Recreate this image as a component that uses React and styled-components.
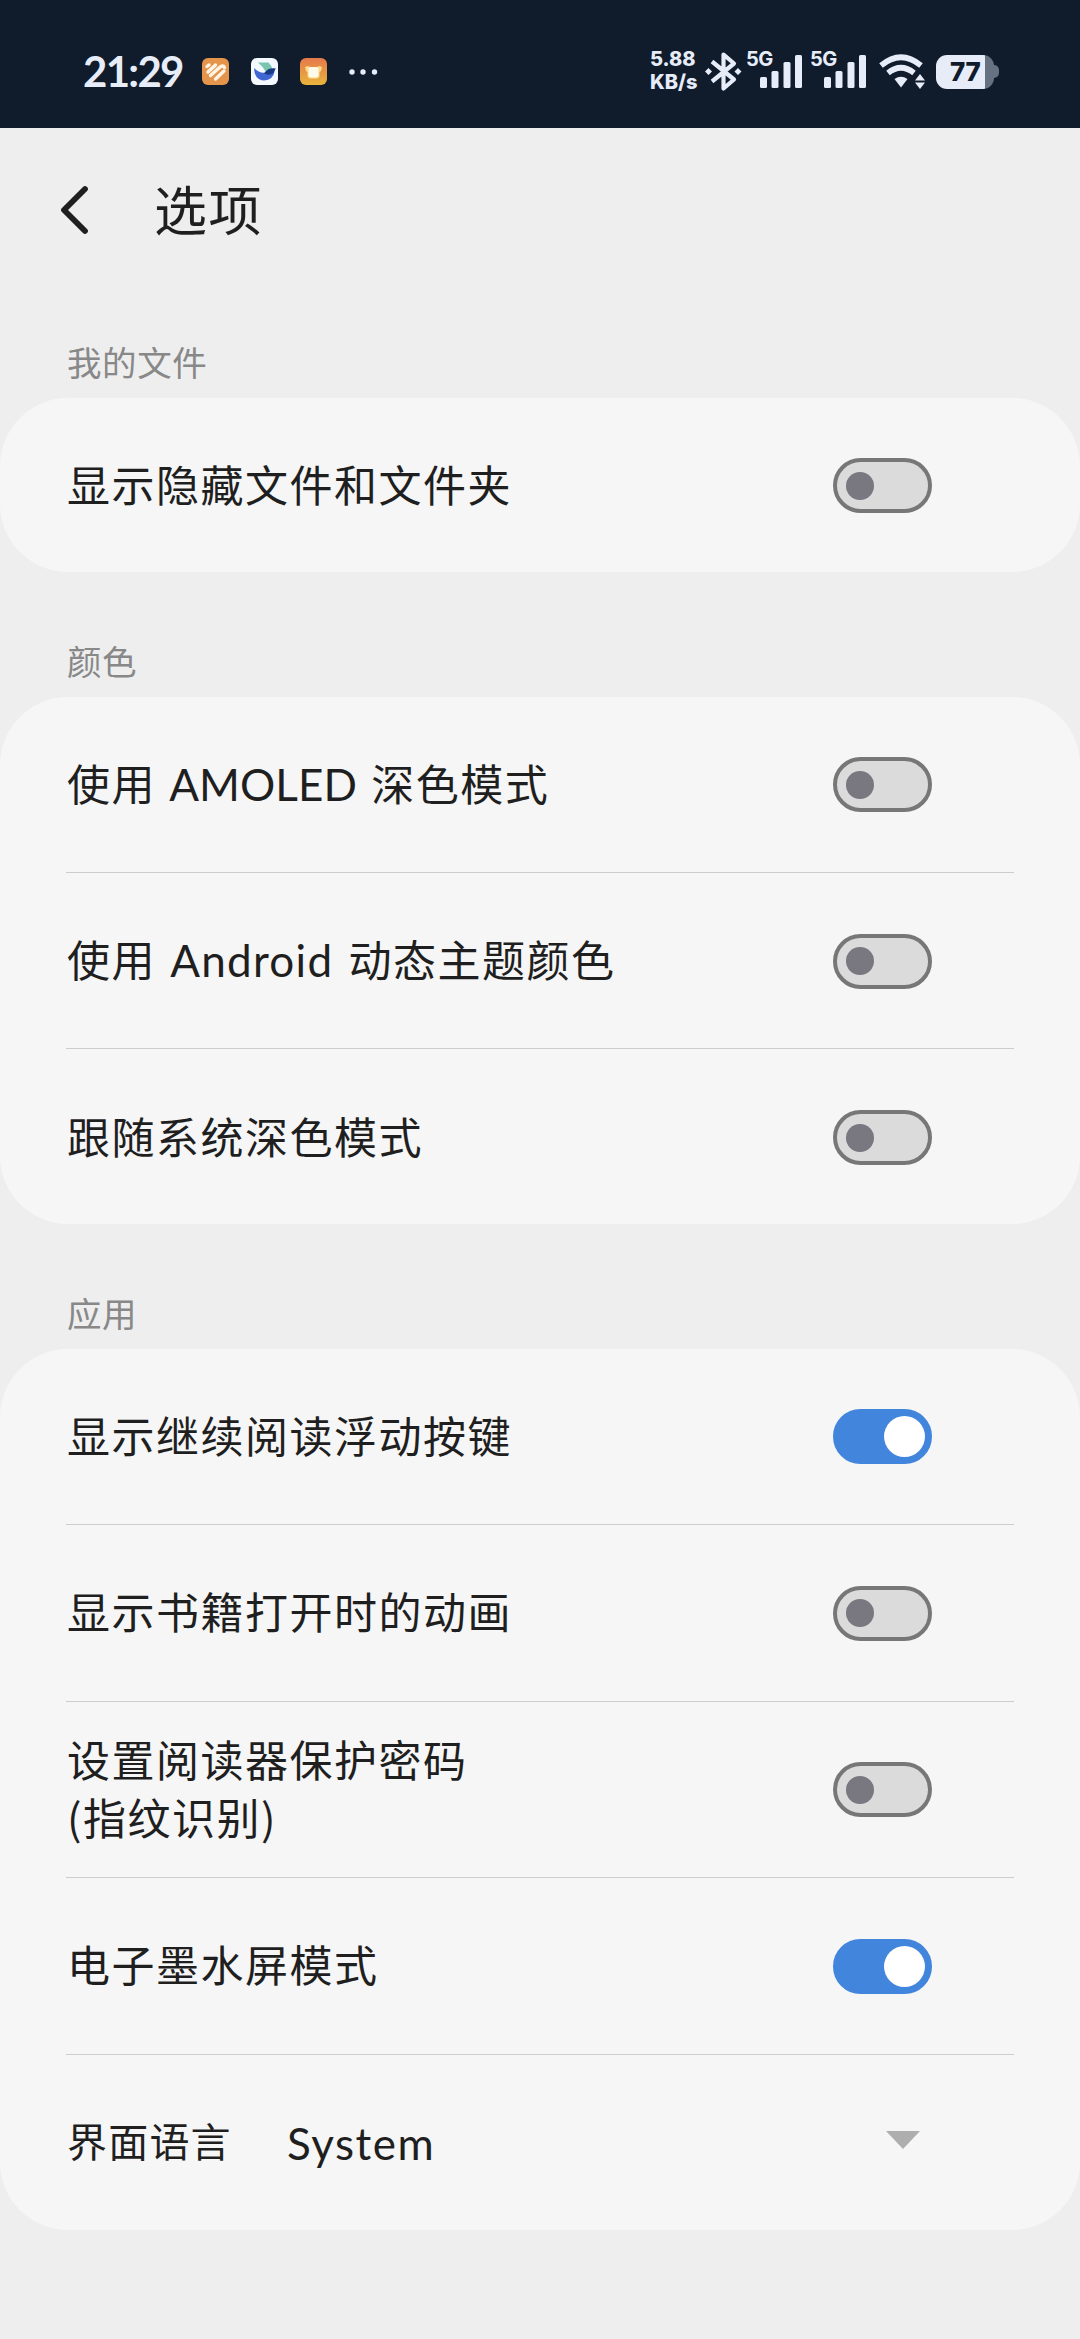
import { useState } from "react";
import styled, { createGlobalStyle, css } from "styled-components";

const sections = [
  {
    title: "我的文件",
    rows: [{ id: "hidden", label: "显示隐藏文件和文件夹", on: false }],
  },
  {
    title: "颜色",
    rows: [
      { id: "amoled", label: ["使用 ", "AMOLED", " 深色模式"], tight: true, on: false },
      { id: "dynamic", label: ["使用 ", "Android", " 动态主题颜色"], on: false },
      { id: "follow", label: "跟随系统深色模式", on: false },
    ],
  },
  {
    title: "应用",
    rows: [
      { id: "continue", label: "显示继续阅读浮动按键", on: true },
      { id: "animation", label: "显示书籍打开时的动画", on: false },
      { id: "password", label: "设置阅读器保护密码\n(指纹识别)", on: false },
      { id: "eink", label: "电子墨水屏模式", on: true },
      { id: "language", label: "界面语言", value: "System" },
    ],
  },
];

const GlobalStyle = createGlobalStyle`
  * {
    box-sizing: border-box;
  }
  body {
    margin: 0;
    background-color: #eeeeee;
    color: #1f1f1f;
    font-family: "Noto Sans CJK SC", sans-serif;
  }
`;

const Page = styled.div`
  width: 1080px;
  min-height: 2339px;
  background-color: #eeeeee;
`;

const StatusBar = styled.header`
  display: flex;
  justify-content: space-between;
  height: 128px;
  padding: 50px 81px 0 83px;
  background-color: #101b2c;
  color: #e6edf8;
  font-family: Inter, sans-serif;
`;
const StatusGroup = styled.div`
  display: flex;
  align-items: center;
  height: 43px;
`;
const Clock = styled.span`
  width: 119px;
  font-family: Lato, sans-serif;
  font-size: 42px;
  font-weight: 700;
  line-height: 43px;
  letter-spacing: -1.7px;
`;
const AppIcons = styled.div`
  display: flex;
  gap: 22px;
`;
const MoreDots = styled.svg`
  margin-left: 21px;
`;
const Speed = styled.div`
  width: 55px;
  font-size: 20px;
  font-weight: 800;
  line-height: 22.5px;
  padding-bottom: 2px;
`;
const Signal = styled.div`
  display: flex;
  align-items: flex-start;
  width: 64px;
  height: 43px;
`;
const SignalLabel = styled.span`
  width: 14px;
  font-size: 20px;
  font-weight: 700;
  line-height: 18px;
  letter-spacing: -0.5px;
  white-space: nowrap;
`;
const Battery = styled.div`
  display: flex;
  align-items: center;
  margin-left: 11px;
`;
const BatteryBody = styled.div`
  width: 58px;
  height: 34px;
  border-radius: 11px;
  background: linear-gradient(90deg, #e6edf8 0 49px, #667182 49px);
  color: #101b2c;
  font-size: 26px;
  font-weight: 800;
  line-height: 34px;
  letter-spacing: -0.4px;
  padding-left: 14px;
`;
const BatteryCap = styled.div`
  width: 5px;
  height: 13px;
  border-radius: 0 5px 5px 0;
  background-color: #667182;
`;

const TopBar = styled.div`
  display: flex;
  align-items: center;
  height: 164px;
  padding-left: 59px;
`;
const BackButton = styled.button`
  display: flex;
  padding: 0;
  border: none;
  background: none;
  color: inherit;
  cursor: pointer;
`;
const Title = styled.h1`
  margin: 0 0 5px 65px;
  font-size: 53px;
  font-weight: 400;
  line-height: 60px;
  letter-spacing: 1.5px;
`;

const Section = styled.section`
  display: flex;
  flex-direction: column;
`;
const SectionTitle = styled.h2`
  display: flex;
  align-items: flex-end;
  height: ${({ $first }) => ($first ? "106px" : "125px")};
  margin: 0;
  padding: 0 0 12px 67px;
  color: #888888;
  font-size: 34.5px;
  font-weight: 400;
  line-height: 50px;
  letter-spacing: 0.6px;
`;
const Card = styled.div`
  border-radius: 68px;
  padding: 0 66px;
  background-color: #f6f6f6;
`;
const Row = styled.div`
  display: flex;
  align-items: center;
  height: 174px;
  padding-right: 82px;
`;
const Divider = styled.hr`
  height: 1px;
  margin: 0.8px 0;
  border: none;
  background-color: #cdcdcd;
`;
const Label = styled.span`
  flex: 1;
  padding: 0 0 ${({ $mixed }) => ($mixed ? "3px" : "5px")} 1px;
  white-space: pre-line;
  font-size: 43px;
  line-height: 58px;
  letter-spacing: 1.5px;
  ${({ $compact }) =>
    $compact &&
    css`
      flex: none;
      width: 221px;
      font-size: 40px;
      letter-spacing: 1.2px;
    `}
`;
const Latin = styled.span`
  margin: 0 ${({ $tight }) => ($tight ? "3px 0 2px" : "4px 0 3px")};
  font-family: Lato, sans-serif;
  font-size: 44px;
  font-weight: 400;
  letter-spacing: ${({ $tight }) => ($tight ? "0.1px" : "1.3px")};
`;
const Value = styled(Latin)`
  flex: 1;
  margin: 0;
  letter-spacing: 1.5px;
`;
const Arrow = styled.svg`
  margin: 0 12px 5px 0;
`;

const Toggle = styled.button`
  display: flex;
  align-items: center;
  flex: none;
  width: 99px;
  height: 55px;
  margin-top: 1px;
  padding: 0 9px;
  border: 4px solid #777777;
  border-radius: 28px;
  background-color: #dbdbdb;
  cursor: pointer;
  ${({ $on }) =>
    $on &&
    css`
      justify-content: flex-end;
      padding: 0 3px;
      border-color: #4285dc;
      background-color: #4285dc;
    `}
`;
const Knob = styled.span`
  width: ${({ $on }) => ($on ? "41px" : "28px")};
  height: ${({ $on }) => ($on ? "41px" : "28px")};
  border-radius: 50%;
  background-color: ${({ $on }) => ($on ? "#ffffff" : "#79777f")};
`;

function NoteIcon() {
  return (
    <svg width="27" height="27" viewBox="0 0 27 27">
      <rect width="27" height="27" rx="6" fill="#e5954b" />
      <g fill="none" stroke="#fff4e6" strokeWidth="3.4" strokeLinecap="round">
        <path d="M5 8.5L7 7" />
        <path d="M6 14L13.5 7" />
        <path d="M8.5 17.5L17.5 9.5Q21 6.5 22.5 9.5" />
        <path d="M13.5 21L22 13" />
      </g>
    </svg>
  );
}

function BirdIcon() {
  return (
    <svg width="27" height="27" viewBox="0 0 27 27">
      <rect width="27" height="27" rx="6" fill="#f4f8ff" />
      <path d="M7 4.5H17.5Q20.5 7.5 21 10.5L14.5 13.5Q12 8.5 7 4.5Z" fill="#79c5b0" />
      <path d="M3 10Q9 16 14.5 14.5L24 12Q22 22.5 13 22.5Q3.5 22 3 10Z" fill="#3f66d3" />
      <path d="M13 15.5Q17 9 25 10.5Q23 12.5 22.5 15Q18 18 13 15.5Z" fill="#183b82" />
    </svg>
  );
}

function CrabIcon() {
  return (
    <svg width="27" height="27" viewBox="0 0 27 27">
      <defs>
        <linearGradient id="crab" x1="0" y1="0" x2="0" y2="1">
          <stop offset="0" stopColor="#e5794a" />
          <stop offset="1" stopColor="#e8b53c" />
        </linearGradient>
      </defs>
      <rect width="27" height="27" rx="6" fill="url(#crab)" />
      <path
        d="M5 9L8 8L10 9H17L19 8L22 9L21 13L19.5 14V18Q19 20.5 16 20.5H11Q8 20.5 7.5 18V14L6 13Z"
        fill="#ffd98c"
      />
      <rect x="8.5" y="9" width="10" height="10.5" rx="3" fill="#fffbea" />
    </svg>
  );
}

function SignalBars() {
  return (
    <svg width="43" height="43" viewBox="0 0 43 43" fill="#e6edf8">
      <rect x="0" y="27" width="7" height="11" rx="1.5" />
      <rect x="11.5" y="21" width="7" height="17" rx="1.5" />
      <rect x="23.5" y="12" width="7" height="26" rx="1.5" />
      <rect x="35" y="5" width="7" height="33" rx="1.5" />
    </svg>
  );
}

function Bluetooth() {
  return (
    <svg width="41" height="43" viewBox="0 0 41 43">
      <path
        d="M7 11.5L29 29.5L18.5 38.5V4.5L29 13.5L7 31.5"
        fill="none"
        stroke="#e6edf8"
        strokeWidth="4.2"
        strokeLinejoin="round"
      />
      <path d="M3.5 18L7 21.5L3.5 25L0 21.5ZM33 18L36.5 21.5L33 25L29.5 21.5Z" fill="#e6edf8" />
    </svg>
  );
}

const WifiIcon = styled.svg`
  margin-left: 5px;
`;

function Wifi() {
  return (
    <WifiIcon width="46" height="43" viewBox="0 0 46 43">
      <g fill="none" stroke="#e6edf8" strokeWidth="5.6">
        <path d="M2 15.5Q22 -1 42 15.5" />
        <path d="M9 23Q22 12.5 35 23" />
      </g>
      <path d="M15.5 29Q22 24.5 28.5 29L22 37.5Z" fill="#e6edf8" />
      <path d="M41 24L46 30.5H36ZM36 32.5H46L41 39Z" fill="#e6edf8" />
    </WifiIcon>
  );
}

function RowLabel({ label, compact, tight }) {
  if (Array.isArray(label)) {
    const [before, latin, after] = label;
    return (
      <Label $mixed>
        {before}
        <Latin $tight={tight}>{latin}</Latin>
        {after}
      </Label>
    );
  }
  return <Label $compact={compact}>{label}</Label>;
}

function SettingRow({ row }) {
  const [on, setOn] = useState(row.on);

  if (row.value) {
    return (
      <Row>
        <RowLabel label={row.label} compact />
        <Value>{row.value}</Value>
        <Arrow width="34" height="18" viewBox="0 0 34 18">
          <path d="M0 0H34L17 18Z" fill="#aeaeae" />
        </Arrow>
      </Row>
    );
  }

  return (
    <Row>
      <RowLabel label={row.label} tight={row.tight} />
      <Toggle $on={on} role="switch" aria-checked={on} onClick={() => setOn(!on)}>
        <Knob $on={on} />
      </Toggle>
    </Row>
  );
}

function App() {
  return (
    <Page>
      <GlobalStyle />
      <StatusBar>
        <StatusGroup>
          <Clock>21:29</Clock>
          <AppIcons>
            <NoteIcon />
            <BirdIcon />
            <CrabIcon />
          </AppIcons>
          <MoreDots width="30" height="8" viewBox="0 0 30 8" fill="#e6edf8">
            <circle cx="4" cy="4" r="2.7" />
            <circle cx="15" cy="4" r="2.7" />
            <circle cx="26.5" cy="4" r="2.7" />
          </MoreDots>
        </StatusGroup>
        <StatusGroup>
          <Speed>
            5.88
            <br />
            KB/s
          </Speed>
          <Bluetooth />
          <Signal>
            <SignalLabel>5G</SignalLabel>
            <SignalBars />
          </Signal>
          <Signal>
            <SignalLabel>5G</SignalLabel>
            <SignalBars />
          </Signal>
          <Wifi />
          <Battery>
            <BatteryBody>77</BatteryBody>
            <BatteryCap />
          </Battery>
        </StatusGroup>
      </StatusBar>
      <TopBar>
        <BackButton aria-label="返回">
          <svg width="30" height="50" viewBox="0 0 30 50">
            <path
              d="M26 4L5 25L26 46"
              fill="none"
              stroke="#1f1f1f"
              strokeWidth="5.8"
              strokeLinecap="round"
              strokeLinejoin="round"
            />
          </svg>
        </BackButton>
        <Title>选项</Title>
      </TopBar>
      {sections.map((section, i) => (
        <Section key={section.title}>
          <SectionTitle $first={i === 0}>{section.title}</SectionTitle>
          <Card>
            {section.rows.map((row, j) => (
              <div key={row.id}>
                {j > 0 && <Divider />}
                <SettingRow row={row} />
              </div>
            ))}
          </Card>
        </Section>
      ))}
    </Page>
  );
}

export default App;
